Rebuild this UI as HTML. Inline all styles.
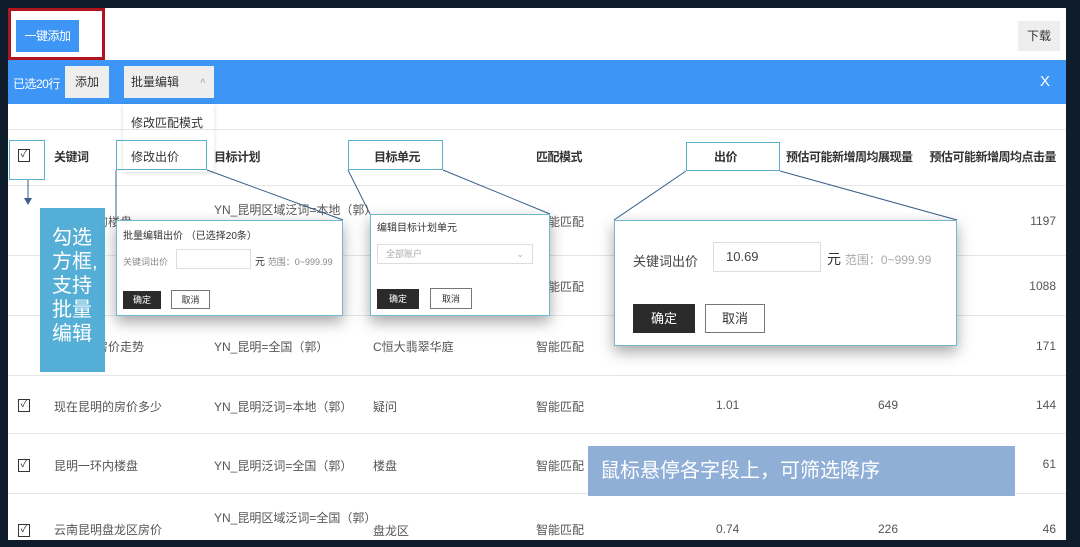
<!DOCTYPE html><html><head><meta charset="utf-8"><style>
*{margin:0;padding:0;box-sizing:border-box}
body{width:1080px;height:547px;background:#0f1c2c;font-family:"Liberation Sans","Noto Sans CJK SC",sans-serif;font-size:12px;color:#333;position:relative;overflow:hidden}
.a{position:absolute;white-space:nowrap}
.card{position:absolute;left:8px;top:8px;width:1058px;height:532px;background:#fff}
.line{position:absolute;left:8px;width:1058px;height:1px;background:#e6e6e6}
.cb{position:absolute;width:12px;height:13px;border:1.5px solid #333;font-size:10px;line-height:10px;text-align:center}
.pop{position:absolute;background:#fff;border:1px solid #6fb8d0;box-shadow:0 6px 14px rgba(0,0,0,.35)}
.btnd{position:absolute;background:#2b2b2b;color:#fff;text-align:center}
.btnw{position:absolute;border:1px solid #777;background:#fff;text-align:center}
.box{position:absolute;border:1.5px solid #5ab0cc}
.h{font-weight:bold;letter-spacing:-0.5px}
.r{color:#555}
</style></head><body>
<div class="card"></div>
<div class="a" style="left:8px;top:8px;width:97px;height:52px;border:3px solid #b0141e"></div>
<div class="a" style="left:16px;top:20px;width:63px;height:32px;background:#3d96f5;color:#fff;line-height:32px;text-align:center;letter-spacing:-0.5px">一键添加</div>
<div class="a" style="left:1018px;top:21px;width:42px;height:30px;background:#eee;line-height:30px;text-align:center">下载</div>
<div class="a" style="left:8px;top:60px;width:1058px;height:44px;background:#3d96f5"></div>
<div class="a" style="left:13px;top:75px;color:#fff;letter-spacing:-0.5px">已选20行</div>
<div class="a" style="left:65px;top:66px;width:44px;height:32px;background:#eee;line-height:32px;text-align:center">添加</div>
<div class="a" style="left:124px;top:66px;width:90px;height:32px;background:#eee;line-height:32px;padding-left:7px">批量编辑 <span style="color:#999;margin-left:18px;font-size:10px">^</span></div>
<div class="a" style="left:1040px;top:73px;color:#fff;font-size:15px">X</div>
<div class="a" style="left:123px;top:104px;width:91px;height:68px;background:#fff;box-shadow:0 1px 4px rgba(0,0,0,.15)"></div>
<div class="a" style="left:131px;top:114px">修改匹配模式</div>
<div class="line" style="top:129px"></div>
<div class="line" style="top:185px"></div><div class="line" style="top:255px"></div><div class="line" style="top:315px"></div><div class="line" style="top:375px"></div><div class="line" style="top:433px"></div><div class="line" style="top:493px"></div>
<!-- header -->
<div class="box" style="left:9px;top:140px;width:36px;height:40px"></div>
<div class="cb" style="left:18px;top:149px">✓</div>
<div class="a h" style="left:54px;top:148px">关键词</div>
<div class="box" style="left:116px;top:140px;width:91px;height:30px"></div>
<div class="a" style="left:131px;top:148px">修改出价</div>
<div class="a h" style="left:214px;top:148px">目标计划</div>
<div class="box" style="left:348px;top:140px;width:95px;height:30px"></div>
<div class="a h" style="left:374px;top:148px">目标单元</div>
<div class="a h" style="left:536px;top:148px">匹配模式</div>
<div class="box" style="left:686px;top:142px;width:94px;height:29px"></div>
<div class="a h" style="left:714px;top:148px">出价</div>
<div class="a h" style="left:786px;top:148px">预估可能新增周均展现量</div>
<div class="a h" style="right:24px;top:148px">预估可能新增周均点击量</div>
<!-- rows -->
<div class="a r" style="left:60px;top:213px">南开盘的楼盘</div><div class="a r" style="left:214px;top:201px">YN_昆明区域泛词=本地（郭）</div><div class="a r" style="left:536px;top:213px">智能匹配</div><div class="a r" style="right:24px;top:214px">1197</div>
<div class="a r" style="left:60px;top:278px">买什么</div><div class="a r" style="left:536px;top:278px">智能匹配</div><div class="a r" style="right:24px;top:279px">1088</div>
<div class="a r" style="left:60px;top:338px">翠华庭房价走势</div><div class="a r" style="left:214px;top:338px">YN_昆明=全国（郭）</div><div class="a r" style="left:373px;top:338px">C恒大翡翠华庭</div><div class="a r" style="left:536px;top:338px">智能匹配</div><div class="a r" style="right:24px;top:339px">171</div>
<div class="cb" style="left:18px;top:399px">✓</div><div class="a r" style="left:54px;top:398px">现在昆明的房价多少</div><div class="a r" style="left:214px;top:398px">YN_昆明泛词=本地（郭）</div><div class="a r" style="left:373px;top:398px">疑问</div><div class="a r" style="left:536px;top:398px">智能匹配</div><div class="a r" style="left:716px;top:398px">1.01</div><div class="a r" style="left:878px;top:398px">649</div><div class="a r" style="right:24px;top:398px">144</div>
<div class="cb" style="left:18px;top:459px">✓</div><div class="a r" style="left:54px;top:457px">昆明一环内楼盘</div><div class="a r" style="left:214px;top:457px">YN_昆明泛词=全国（郭）</div><div class="a r" style="left:373px;top:457px">楼盘</div><div class="a r" style="left:536px;top:457px">智能匹配</div><div class="a r" style="right:24px;top:457px">61</div>
<div class="cb" style="left:18px;top:524px">✓</div><div class="a r" style="left:54px;top:521px">云南昆明盘龙区房价</div><div class="a r" style="left:214px;top:509px">YN_昆明区域泛词=全国（郭）</div><div class="a r" style="left:373px;top:522px">盘龙区</div><div class="a r" style="left:536px;top:521px">智能匹配</div><div class="a r" style="left:716px;top:522px">0.74</div><div class="a r" style="left:878px;top:522px">226</div><div class="a r" style="right:24px;top:522px">46</div>
<!-- lines -->
<svg class="a" style="left:0;top:0" width="1080" height="547"><g stroke="#3a5f8a" stroke-width="1" fill="none">
<line x1="116" y1="170" x2="116" y2="220"/><line x1="207" y1="170" x2="343" y2="220"/>
<line x1="348" y1="170" x2="370" y2="214"/><line x1="443" y1="170" x2="550" y2="214"/>
<line x1="686" y1="171" x2="614" y2="220"/><line x1="780" y1="171" x2="957" y2="220"/>
<line x1="28" y1="180" x2="28" y2="200"/></g><polygon points="24,198 32,198 28,205" fill="#3a5f8a"/></svg>
<div class="a" style="left:40px;top:208px;width:65px;height:164px;background:#55aed6;color:#fff;font-size:20px;line-height:24px;padding:18px 0 0 0"><div style="padding-left:12px">勾选<br>方框,<br>支持<br>批量<br>编辑</div></div>
<!-- popups -->
<div class="pop" style="left:116px;top:220px;width:227px;height:96px">
<div class="a" style="left:6px;top:6px;font-size:10px">批量编辑出价 （已选择20条）</div>
<div class="a" style="left:6px;top:34px;font-size:9px;color:#888">关键词出价</div>
<div class="a" style="left:59px;top:28px;width:75px;height:20px;border:1px solid #ddd"></div>
<div class="a" style="left:138px;top:32px;font-size:10px">元 <span style="color:#888;font-size:9px">范围：0~999.99</span></div>
<div class="btnd" style="left:6px;top:70px;width:38px;height:18px;font-size:9px;line-height:18px">确定</div>
<div class="btnw" style="left:54px;top:69px;width:39px;height:19px;font-size:9px;line-height:18px">取消</div></div>
<div class="pop" style="left:370px;top:214px;width:180px;height:102px">
<div class="a" style="left:6px;top:4px;font-size:10px">编辑目标计划单元</div>
<div class="a" style="left:6px;top:29px;width:156px;height:20px;border:1px solid #ddd;font-size:9px;color:#aaa;line-height:18px;padding-left:8px">全部账户<span style="position:absolute;right:8px">⌄</span></div>
<div class="btnd" style="left:6px;top:74px;width:42px;height:20px;font-size:9px;line-height:20px">确定</div>
<div class="btnw" style="left:59px;top:73px;width:42px;height:21px;font-size:9px;line-height:20px">取消</div></div>
<div class="pop" style="left:614px;top:220px;width:343px;height:126px">
<div class="a" style="left:18px;top:30px;color:#444;font-size:13px">关键词出价</div>
<div class="a" style="left:98px;top:21px;width:108px;height:30px;border:1px solid #ddd;line-height:28px;padding-left:12px;color:#444;font-size:13px">10.69</div>
<div class="a" style="left:212px;top:28px;font-size:14px">元 <span style="color:#aaa;font-size:12px">范围：0~999.99</span></div>
<div class="btnd" style="left:18px;top:83px;width:62px;height:29px;line-height:29px;font-size:13px">确定</div>
<div class="btnw" style="left:90px;top:83px;width:60px;height:29px;line-height:27px;font-size:13px">取消</div></div>
<div class="a" style="left:588px;top:446px;width:427px;height:50px;background:#8fafd6;color:#fff;font-size:20px;line-height:50px;padding-left:12px">鼠标悬停各字段上，可筛选降序</div>
</body></html>
